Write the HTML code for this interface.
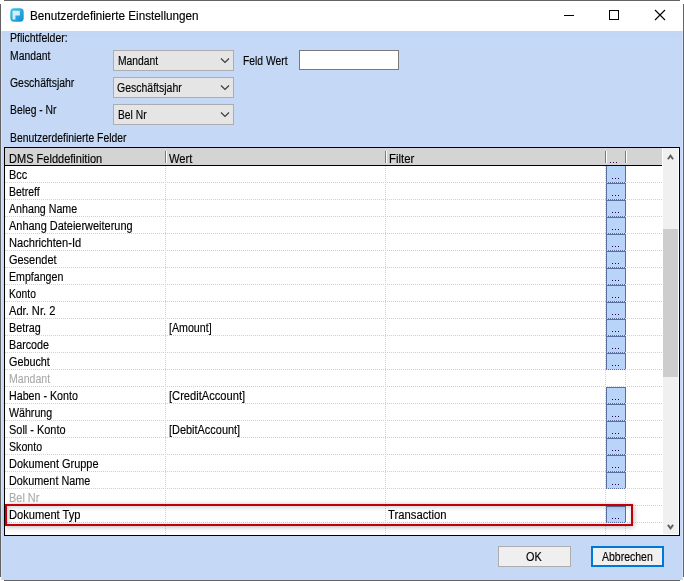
<!DOCTYPE html>
<html><head><meta charset="utf-8"><style>
html,body{margin:0;padding:0}
body{width:684px;height:581px;position:relative;overflow:hidden;background:#fff;font-family:'Liberation Sans',sans-serif;}
body>div{position:absolute}
.t{white-space:nowrap;font-size:12px;-webkit-text-stroke:0.15px currentColor;line-height:14px;transform-origin:0 0;font-family:'Liberation Sans',sans-serif;}
</style></head><body>
<div style="left:4px;top:0px;width:676px;height:1px;background:#636363"></div>
<div style="left:4px;top:580px;width:676px;height:1px;background:#636363"></div>
<div style="left:0px;top:4px;width:1px;height:573px;background:#636363"></div>
<div style="left:683px;top:4px;width:1px;height:573px;background:#636363"></div>
<div style="left:1px;top:1px;width:682px;height:30px;background:#fff"></div>
<svg style="position:absolute;left:10px;top:8px" width="14" height="14" viewBox="0 0 14 14"><defs><linearGradient id="g" x1="0" y1="0" x2="1" y2="1"><stop offset="0" stop-color="#48c4ee"/><stop offset="1" stop-color="#0b8fd0"/></linearGradient><filter id="bl" x="-20%" y="-20%" width="140%" height="140%"><feGaussianBlur stdDeviation="0.6"/></filter></defs><rect x="0.3" y="0.3" width="13.4" height="13.4" rx="3.6" fill="url(#g)"/><path d="M2.6 2.8h7.2v4.6h-4.4v4.2h-2.8z" fill="#f2fbff" opacity="0.85" filter="url(#bl)"/></svg>
<div style="left:564px;top:15px;width:10px;height:1px;background:#000"></div>
<div style="left:609px;top:10px;width:10px;height:10px;border:1px solid #000;box-sizing:border-box"></div>
<svg style="position:absolute;left:654px;top:9px" width="12" height="12" viewBox="0 0 12 12"><path d="M1 1L11 11M11 1L1 11" stroke="#000" stroke-width="1.1"/></svg>
<div style="left:1px;top:31px;width:682px;height:549px;background:#c5d9f7"></div>
<div style="left:1px;top:31px;width:682px;height:6px;background:#c2d7f5"></div>
<div style="left:1px;top:37px;width:7px;height:1px;background:#d4d7da"></div>
<div style="left:71px;top:37px;width:611px;height:1px;background:#d4d7da"></div>
<div style="left:1px;top:129px;width:681px;height:1px;background:#d4d7da"></div>
<div style="left:1px;top:137px;width:7px;height:1px;background:#d4d7da"></div>
<div style="left:128px;top:137px;width:554px;height:1px;background:#d4d7da"></div>
<div style="left:1px;top:31px;width:1px;height:549px;background:#d2e4fb"></div>
<div style="left:682px;top:31px;width:1px;height:549px;background:#d2e4fb"></div>
<div style="left:113px;top:50px;width:121px;height:21px;background:#e5e5e5;border:1px solid #adadad;box-sizing:border-box"></div>
<svg style="position:absolute;left:219px;top:57px" width="12" height="8" viewBox="0 0 12 8"><path d="M2 1.5L6 5.5L10 1.5" stroke="#3c3c3c" stroke-width="1.2" fill="none"/></svg>
<div style="left:113px;top:77px;width:121px;height:21px;background:#e5e5e5;border:1px solid #adadad;box-sizing:border-box"></div>
<svg style="position:absolute;left:219px;top:84px" width="12" height="8" viewBox="0 0 12 8"><path d="M2 1.5L6 5.5L10 1.5" stroke="#3c3c3c" stroke-width="1.2" fill="none"/></svg>
<div style="left:113px;top:104px;width:121px;height:21px;background:#e5e5e5;border:1px solid #adadad;box-sizing:border-box"></div>
<svg style="position:absolute;left:219px;top:111px" width="12" height="8" viewBox="0 0 12 8"><path d="M2 1.5L6 5.5L10 1.5" stroke="#3c3c3c" stroke-width="1.2" fill="none"/></svg>
<div style="left:299px;top:50px;width:100px;height:20px;background:#fff;border:1px solid #7a7a7a;box-sizing:border-box"></div>
<div style="left:4px;top:147px;width:676px;height:389px;background:#fff;border:1px solid #000;box-sizing:border-box"></div>
<div style="left:5px;top:148px;width:657px;height:17px;background:#d4d4d4"></div>
<div style="left:5px;top:165px;width:657px;height:1px;background:#000"></div>
<div style="left:165px;top:151px;width:1px;height:12px;background:#7a7a7a"></div>
<div style="left:166px;top:151px;width:1px;height:12px;background:#fff"></div>
<div style="left:385px;top:151px;width:1px;height:12px;background:#7a7a7a"></div>
<div style="left:386px;top:151px;width:1px;height:12px;background:#fff"></div>
<div style="left:605px;top:151px;width:1px;height:12px;background:#7a7a7a"></div>
<div style="left:606px;top:151px;width:1px;height:12px;background:#fff"></div>
<div style="left:625px;top:151px;width:1px;height:12px;background:#7a7a7a"></div>
<div style="left:626px;top:151px;width:1px;height:12px;background:#fff"></div>
<div style="left:610px;top:162px;width:1px;height:1px;background:#3a0050"></div>
<div style="left:613px;top:162px;width:1px;height:1px;background:#3a0050"></div>
<div style="left:616px;top:162px;width:1px;height:1px;background:#3a0050"></div>
<div style="left:165px;top:166px;width:1px;height:369px;background-image:linear-gradient(to bottom,#d0d0d0 50%,transparent 50%);background-size:1px 2px"></div>
<div style="left:385px;top:166px;width:1px;height:369px;background-image:linear-gradient(to bottom,#d0d0d0 50%,transparent 50%);background-size:1px 2px"></div>
<div style="left:605px;top:166px;width:1px;height:369px;background-image:linear-gradient(to bottom,#d0d0d0 50%,transparent 50%);background-size:1px 2px"></div>
<div style="left:625px;top:166px;width:1px;height:369px;background-image:linear-gradient(to bottom,#d0d0d0 50%,transparent 50%);background-size:1px 2px"></div>
<div style="left:5px;top:182px;width:657px;height:1px;background-image:linear-gradient(to right,#d0d0d0 50%,transparent 50%);background-size:2px 1px"></div>
<div style="left:5px;top:199px;width:657px;height:1px;background-image:linear-gradient(to right,#d0d0d0 50%,transparent 50%);background-size:2px 1px"></div>
<div style="left:5px;top:216px;width:657px;height:1px;background-image:linear-gradient(to right,#d0d0d0 50%,transparent 50%);background-size:2px 1px"></div>
<div style="left:5px;top:233px;width:657px;height:1px;background-image:linear-gradient(to right,#d0d0d0 50%,transparent 50%);background-size:2px 1px"></div>
<div style="left:5px;top:250px;width:657px;height:1px;background-image:linear-gradient(to right,#d0d0d0 50%,transparent 50%);background-size:2px 1px"></div>
<div style="left:5px;top:267px;width:657px;height:1px;background-image:linear-gradient(to right,#d0d0d0 50%,transparent 50%);background-size:2px 1px"></div>
<div style="left:5px;top:284px;width:657px;height:1px;background-image:linear-gradient(to right,#d0d0d0 50%,transparent 50%);background-size:2px 1px"></div>
<div style="left:5px;top:301px;width:657px;height:1px;background-image:linear-gradient(to right,#d0d0d0 50%,transparent 50%);background-size:2px 1px"></div>
<div style="left:5px;top:318px;width:657px;height:1px;background-image:linear-gradient(to right,#d0d0d0 50%,transparent 50%);background-size:2px 1px"></div>
<div style="left:5px;top:335px;width:657px;height:1px;background-image:linear-gradient(to right,#d0d0d0 50%,transparent 50%);background-size:2px 1px"></div>
<div style="left:5px;top:352px;width:657px;height:1px;background-image:linear-gradient(to right,#d0d0d0 50%,transparent 50%);background-size:2px 1px"></div>
<div style="left:5px;top:369px;width:657px;height:1px;background-image:linear-gradient(to right,#d0d0d0 50%,transparent 50%);background-size:2px 1px"></div>
<div style="left:5px;top:386px;width:657px;height:1px;background-image:linear-gradient(to right,#d0d0d0 50%,transparent 50%);background-size:2px 1px"></div>
<div style="left:5px;top:403px;width:657px;height:1px;background-image:linear-gradient(to right,#d0d0d0 50%,transparent 50%);background-size:2px 1px"></div>
<div style="left:5px;top:420px;width:657px;height:1px;background-image:linear-gradient(to right,#d0d0d0 50%,transparent 50%);background-size:2px 1px"></div>
<div style="left:5px;top:437px;width:657px;height:1px;background-image:linear-gradient(to right,#d0d0d0 50%,transparent 50%);background-size:2px 1px"></div>
<div style="left:5px;top:454px;width:657px;height:1px;background-image:linear-gradient(to right,#d0d0d0 50%,transparent 50%);background-size:2px 1px"></div>
<div style="left:5px;top:471px;width:657px;height:1px;background-image:linear-gradient(to right,#d0d0d0 50%,transparent 50%);background-size:2px 1px"></div>
<div style="left:5px;top:488px;width:657px;height:1px;background-image:linear-gradient(to right,#d0d0d0 50%,transparent 50%);background-size:2px 1px"></div>
<div style="left:5px;top:505px;width:657px;height:1px;background-image:linear-gradient(to right,#d0d0d0 50%,transparent 50%);background-size:2px 1px"></div>
<div style="left:5px;top:522px;width:657px;height:1px;background-image:linear-gradient(to right,#d0d0d0 50%,transparent 50%);background-size:2px 1px"></div>
<div style="left:606px;top:166px;width:20px;height:17px;background:#b8d4f8;border:1px solid #5b6f9e;border-top:none;box-sizing:border-box"></div>
<div style="left:606px;top:182px;width:20px;height:1px;background-image:linear-gradient(to right,#5b6f9e 50%,#ded6c8 50%);background-size:2px 1px"></div>
<div style="left:612px;top:178px;width:1px;height:1px;background:#3a0050"></div>
<div style="left:615px;top:178px;width:1px;height:1px;background:#3a0050"></div>
<div style="left:618px;top:178px;width:1px;height:1px;background:#3a0050"></div>
<div style="left:606px;top:183px;width:20px;height:17px;background:#b8d4f8;border:1px solid #5b6f9e;box-sizing:border-box"></div>
<div style="left:606px;top:199px;width:20px;height:1px;background-image:linear-gradient(to right,#5b6f9e 50%,#ded6c8 50%);background-size:2px 1px"></div>
<div style="left:612px;top:195px;width:1px;height:1px;background:#3a0050"></div>
<div style="left:615px;top:195px;width:1px;height:1px;background:#3a0050"></div>
<div style="left:618px;top:195px;width:1px;height:1px;background:#3a0050"></div>
<div style="left:606px;top:200px;width:20px;height:17px;background:#b8d4f8;border:1px solid #5b6f9e;box-sizing:border-box"></div>
<div style="left:606px;top:216px;width:20px;height:1px;background-image:linear-gradient(to right,#5b6f9e 50%,#ded6c8 50%);background-size:2px 1px"></div>
<div style="left:612px;top:212px;width:1px;height:1px;background:#3a0050"></div>
<div style="left:615px;top:212px;width:1px;height:1px;background:#3a0050"></div>
<div style="left:618px;top:212px;width:1px;height:1px;background:#3a0050"></div>
<div style="left:606px;top:217px;width:20px;height:17px;background:#b8d4f8;border:1px solid #5b6f9e;box-sizing:border-box"></div>
<div style="left:606px;top:233px;width:20px;height:1px;background-image:linear-gradient(to right,#5b6f9e 50%,#ded6c8 50%);background-size:2px 1px"></div>
<div style="left:612px;top:229px;width:1px;height:1px;background:#3a0050"></div>
<div style="left:615px;top:229px;width:1px;height:1px;background:#3a0050"></div>
<div style="left:618px;top:229px;width:1px;height:1px;background:#3a0050"></div>
<div style="left:606px;top:234px;width:20px;height:17px;background:#b8d4f8;border:1px solid #5b6f9e;box-sizing:border-box"></div>
<div style="left:606px;top:250px;width:20px;height:1px;background-image:linear-gradient(to right,#5b6f9e 50%,#ded6c8 50%);background-size:2px 1px"></div>
<div style="left:612px;top:246px;width:1px;height:1px;background:#3a0050"></div>
<div style="left:615px;top:246px;width:1px;height:1px;background:#3a0050"></div>
<div style="left:618px;top:246px;width:1px;height:1px;background:#3a0050"></div>
<div style="left:606px;top:251px;width:20px;height:17px;background:#b8d4f8;border:1px solid #5b6f9e;box-sizing:border-box"></div>
<div style="left:606px;top:267px;width:20px;height:1px;background-image:linear-gradient(to right,#5b6f9e 50%,#ded6c8 50%);background-size:2px 1px"></div>
<div style="left:612px;top:263px;width:1px;height:1px;background:#3a0050"></div>
<div style="left:615px;top:263px;width:1px;height:1px;background:#3a0050"></div>
<div style="left:618px;top:263px;width:1px;height:1px;background:#3a0050"></div>
<div style="left:606px;top:268px;width:20px;height:17px;background:#b8d4f8;border:1px solid #5b6f9e;box-sizing:border-box"></div>
<div style="left:606px;top:284px;width:20px;height:1px;background-image:linear-gradient(to right,#5b6f9e 50%,#ded6c8 50%);background-size:2px 1px"></div>
<div style="left:612px;top:280px;width:1px;height:1px;background:#3a0050"></div>
<div style="left:615px;top:280px;width:1px;height:1px;background:#3a0050"></div>
<div style="left:618px;top:280px;width:1px;height:1px;background:#3a0050"></div>
<div style="left:606px;top:285px;width:20px;height:17px;background:#b8d4f8;border:1px solid #5b6f9e;box-sizing:border-box"></div>
<div style="left:606px;top:301px;width:20px;height:1px;background-image:linear-gradient(to right,#5b6f9e 50%,#ded6c8 50%);background-size:2px 1px"></div>
<div style="left:612px;top:297px;width:1px;height:1px;background:#3a0050"></div>
<div style="left:615px;top:297px;width:1px;height:1px;background:#3a0050"></div>
<div style="left:618px;top:297px;width:1px;height:1px;background:#3a0050"></div>
<div style="left:606px;top:302px;width:20px;height:17px;background:#b8d4f8;border:1px solid #5b6f9e;box-sizing:border-box"></div>
<div style="left:606px;top:318px;width:20px;height:1px;background-image:linear-gradient(to right,#5b6f9e 50%,#ded6c8 50%);background-size:2px 1px"></div>
<div style="left:612px;top:314px;width:1px;height:1px;background:#3a0050"></div>
<div style="left:615px;top:314px;width:1px;height:1px;background:#3a0050"></div>
<div style="left:618px;top:314px;width:1px;height:1px;background:#3a0050"></div>
<div style="left:606px;top:319px;width:20px;height:17px;background:#b8d4f8;border:1px solid #5b6f9e;box-sizing:border-box"></div>
<div style="left:606px;top:335px;width:20px;height:1px;background-image:linear-gradient(to right,#5b6f9e 50%,#ded6c8 50%);background-size:2px 1px"></div>
<div style="left:612px;top:331px;width:1px;height:1px;background:#3a0050"></div>
<div style="left:615px;top:331px;width:1px;height:1px;background:#3a0050"></div>
<div style="left:618px;top:331px;width:1px;height:1px;background:#3a0050"></div>
<div style="left:606px;top:336px;width:20px;height:17px;background:#b8d4f8;border:1px solid #5b6f9e;box-sizing:border-box"></div>
<div style="left:606px;top:352px;width:20px;height:1px;background-image:linear-gradient(to right,#5b6f9e 50%,#ded6c8 50%);background-size:2px 1px"></div>
<div style="left:612px;top:348px;width:1px;height:1px;background:#3a0050"></div>
<div style="left:615px;top:348px;width:1px;height:1px;background:#3a0050"></div>
<div style="left:618px;top:348px;width:1px;height:1px;background:#3a0050"></div>
<div style="left:606px;top:353px;width:20px;height:17px;background:#b8d4f8;border:1px solid #5b6f9e;box-sizing:border-box"></div>
<div style="left:606px;top:369px;width:20px;height:1px;background-image:linear-gradient(to right,#5b6f9e 50%,#ded6c8 50%);background-size:2px 1px"></div>
<div style="left:612px;top:365px;width:1px;height:1px;background:#3a0050"></div>
<div style="left:615px;top:365px;width:1px;height:1px;background:#3a0050"></div>
<div style="left:618px;top:365px;width:1px;height:1px;background:#3a0050"></div>
<div style="left:606px;top:387px;width:20px;height:17px;background:#b8d4f8;border:1px solid #5b6f9e;box-sizing:border-box"></div>
<div style="left:606px;top:403px;width:20px;height:1px;background-image:linear-gradient(to right,#5b6f9e 50%,#ded6c8 50%);background-size:2px 1px"></div>
<div style="left:612px;top:399px;width:1px;height:1px;background:#3a0050"></div>
<div style="left:615px;top:399px;width:1px;height:1px;background:#3a0050"></div>
<div style="left:618px;top:399px;width:1px;height:1px;background:#3a0050"></div>
<div style="left:606px;top:404px;width:20px;height:17px;background:#b8d4f8;border:1px solid #5b6f9e;box-sizing:border-box"></div>
<div style="left:606px;top:420px;width:20px;height:1px;background-image:linear-gradient(to right,#5b6f9e 50%,#ded6c8 50%);background-size:2px 1px"></div>
<div style="left:612px;top:416px;width:1px;height:1px;background:#3a0050"></div>
<div style="left:615px;top:416px;width:1px;height:1px;background:#3a0050"></div>
<div style="left:618px;top:416px;width:1px;height:1px;background:#3a0050"></div>
<div style="left:606px;top:421px;width:20px;height:17px;background:#b8d4f8;border:1px solid #5b6f9e;box-sizing:border-box"></div>
<div style="left:606px;top:437px;width:20px;height:1px;background-image:linear-gradient(to right,#5b6f9e 50%,#ded6c8 50%);background-size:2px 1px"></div>
<div style="left:612px;top:433px;width:1px;height:1px;background:#3a0050"></div>
<div style="left:615px;top:433px;width:1px;height:1px;background:#3a0050"></div>
<div style="left:618px;top:433px;width:1px;height:1px;background:#3a0050"></div>
<div style="left:606px;top:438px;width:20px;height:17px;background:#b8d4f8;border:1px solid #5b6f9e;box-sizing:border-box"></div>
<div style="left:606px;top:454px;width:20px;height:1px;background-image:linear-gradient(to right,#5b6f9e 50%,#ded6c8 50%);background-size:2px 1px"></div>
<div style="left:612px;top:450px;width:1px;height:1px;background:#3a0050"></div>
<div style="left:615px;top:450px;width:1px;height:1px;background:#3a0050"></div>
<div style="left:618px;top:450px;width:1px;height:1px;background:#3a0050"></div>
<div style="left:606px;top:455px;width:20px;height:17px;background:#b8d4f8;border:1px solid #5b6f9e;box-sizing:border-box"></div>
<div style="left:606px;top:471px;width:20px;height:1px;background-image:linear-gradient(to right,#5b6f9e 50%,#ded6c8 50%);background-size:2px 1px"></div>
<div style="left:612px;top:467px;width:1px;height:1px;background:#3a0050"></div>
<div style="left:615px;top:467px;width:1px;height:1px;background:#3a0050"></div>
<div style="left:618px;top:467px;width:1px;height:1px;background:#3a0050"></div>
<div style="left:606px;top:472px;width:20px;height:17px;background:#b8d4f8;border:1px solid #5b6f9e;box-sizing:border-box"></div>
<div style="left:606px;top:488px;width:20px;height:1px;background-image:linear-gradient(to right,#5b6f9e 50%,#ded6c8 50%);background-size:2px 1px"></div>
<div style="left:612px;top:484px;width:1px;height:1px;background:#3a0050"></div>
<div style="left:615px;top:484px;width:1px;height:1px;background:#3a0050"></div>
<div style="left:618px;top:484px;width:1px;height:1px;background:#3a0050"></div>
<div style="left:606px;top:506px;width:20px;height:17px;background:#b8d4f8;border:1px solid #5b6f9e;box-sizing:border-box"></div>
<div style="left:606px;top:522px;width:20px;height:1px;background-image:linear-gradient(to right,#5b6f9e 50%,#ded6c8 50%);background-size:2px 1px"></div>
<div style="left:612px;top:518px;width:1px;height:1px;background:#3a0050"></div>
<div style="left:615px;top:518px;width:1px;height:1px;background:#3a0050"></div>
<div style="left:618px;top:518px;width:1px;height:1px;background:#3a0050"></div>
<div style="left:662px;top:148px;width:17px;height:387px;background:#fff"></div>
<div style="left:663px;top:148px;width:15px;height:386px;background:#f0f0f0"></div>
<div style="left:663px;top:229px;width:15px;height:148px;background:#cdcdcd"></div>
<svg style="position:absolute;left:662px;top:148px" width="17" height="17" viewBox="0 0 17 17"><path d="M5.9 11.2L8.5 7.7L11.1 11.2" stroke="#606060" stroke-width="1.9" fill="none"/></svg>
<svg style="position:absolute;left:662px;top:518px" width="17" height="17" viewBox="0 0 17 17"><path d="M5.9 6.9L8.5 10.4L11.1 6.9" stroke="#606060" stroke-width="1.9" fill="none"/></svg>
<div style="left:5px;top:504px;width:628px;height:22px;border:2px solid #c00008;box-sizing:border-box;box-shadow:1px 1px 5px rgba(0,0,0,0.28), inset 1px 1px 5px rgba(0,0,0,0.2)"></div>
<div style="left:498px;top:546px;width:73px;height:21px;background:#efefef;border:1px solid #adadad;box-sizing:border-box"></div>
<div style="left:591px;top:546px;width:73px;height:21px;background:#f0f0f0;border:2px solid #0078d7;box-sizing:border-box"></div>
<div class="t" style="left:30.00px;top:9px;color:#000;transform:scaleX(0.9757)">Benutzerdefinierte Einstellungen</div>
<div class="t" style="left:9.80px;top:31px;color:#000;transform:scaleX(0.8727)">Pflichtfelder:</div>
<div class="t" style="left:10.20px;top:49px;color:#000;transform:scaleX(0.8638)">Mandant</div>
<div class="t" style="left:10.00px;top:76px;color:#000;transform:scaleX(0.8689)">Geschäftsjahr</div>
<div class="t" style="left:10.00px;top:103px;color:#000;transform:scaleX(0.8611)">Beleg - Nr</div>
<div class="t" style="left:242.80px;top:54px;color:#000;transform:scaleX(0.8596)">Feld Wert</div>
<div class="t" style="left:117.50px;top:54px;color:#000;transform:scaleX(0.8617)">Mandant</div>
<div class="t" style="left:117.00px;top:81px;color:#000;transform:scaleX(0.8743)">Geschäftsjahr</div>
<div class="t" style="left:117.50px;top:108px;color:#000;transform:scaleX(0.8576)">Bel Nr</div>
<div class="t" style="left:10.20px;top:131px;color:#000;transform:scaleX(0.8644)">Benutzerdefinierte Felder</div>
<div class="t" style="left:8.80px;top:152px;color:#000;transform:scaleX(0.9188)">DMS Felddefinition</div>
<div class="t" style="left:168.70px;top:152px;color:#000;transform:scaleX(0.9320)">Wert</div>
<div class="t" style="left:388.90px;top:152px;color:#000;transform:scaleX(0.9481)">Filter</div>
<div class="t" style="left:9.40px;top:168px;color:#000;transform:scaleX(0.9100)">Bcc</div>
<div class="t" style="left:9.40px;top:185px;color:#000;transform:scaleX(0.8750)">Betreff</div>
<div class="t" style="left:9.40px;top:202px;color:#000;transform:scaleX(0.8883)">Anhang Name</div>
<div class="t" style="left:9.40px;top:219px;color:#000;transform:scaleX(0.9126)">Anhang Dateierweiterung</div>
<div class="t" style="left:9.40px;top:236px;color:#000;transform:scaleX(0.9244)">Nachrichten-Id</div>
<div class="t" style="left:9.40px;top:253px;color:#000;transform:scaleX(0.9135)">Gesendet</div>
<div class="t" style="left:9.40px;top:270px;color:#000;transform:scaleX(0.8852)">Empfangen</div>
<div class="t" style="left:9.40px;top:287px;color:#000;transform:scaleX(0.8562)">Konto</div>
<div class="t" style="left:9.40px;top:304px;color:#000;transform:scaleX(0.9260)">Adr. Nr. 2</div>
<div class="t" style="left:9.40px;top:321px;color:#000;transform:scaleX(0.9000)">Betrag</div>
<div class="t" style="left:168.90px;top:321px;color:#000;transform:scaleX(0.8875)">[Amount]</div>
<div class="t" style="left:9.40px;top:338px;color:#000;transform:scaleX(0.8956)">Barcode</div>
<div class="t" style="left:9.40px;top:355px;color:#000;transform:scaleX(0.9000)">Gebucht</div>
<div class="t" style="left:9.40px;top:372px;color:#ababab;transform:scaleX(0.8809)">Mandant</div>
<div class="t" style="left:9.40px;top:389px;color:#000;transform:scaleX(0.8897)">Haben - Konto</div>
<div class="t" style="left:168.90px;top:389px;color:#000;transform:scaleX(0.9280)">[CreditAccount]</div>
<div class="t" style="left:9.40px;top:406px;color:#000;transform:scaleX(0.8857)">Währung</div>
<div class="t" style="left:9.40px;top:423px;color:#000;transform:scaleX(0.9113)">Soll - Konto</div>
<div class="t" style="left:168.90px;top:423px;color:#000;transform:scaleX(0.9115)">[DebitAccount]</div>
<div class="t" style="left:9.40px;top:440px;color:#000;transform:scaleX(0.8842)">Skonto</div>
<div class="t" style="left:9.40px;top:457px;color:#000;transform:scaleX(0.9133)">Dokument Gruppe</div>
<div class="t" style="left:9.40px;top:474px;color:#000;transform:scaleX(0.9033)">Dokument Name</div>
<div class="t" style="left:9.40px;top:491px;color:#ababab;transform:scaleX(0.9121)">Bel Nr</div>
<div class="t" style="left:9.40px;top:508px;color:#000;transform:scaleX(0.9273)">Dokument Typ</div>
<div class="t" style="left:388.40px;top:508px;color:#000;transform:scaleX(0.9403)">Transaction</div>
<div class="t" style="left:525.60px;top:550px;color:#000;transform:scaleX(0.9059)">OK</div>
<div class="t" style="left:601.50px;top:550px;color:#000;transform:scaleX(0.8741)">Abbrechen</div>
</body></html>
